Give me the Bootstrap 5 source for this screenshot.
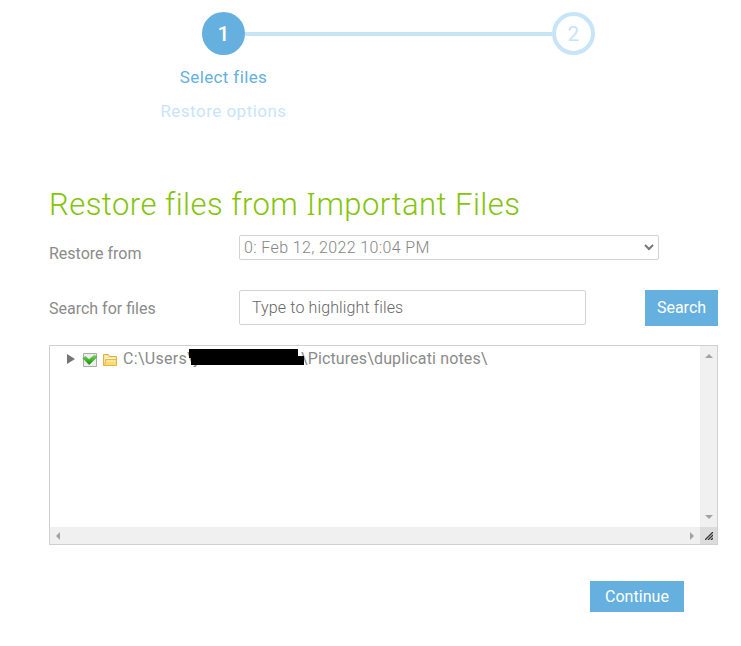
<!DOCTYPE html>
<html lang="en">
<head>
<meta charset="utf-8">
<title>Restore files</title>
<link href="https://cdn.jsdelivr.net/npm/bootstrap@5.3.0/dist/css/bootstrap.min.css" rel="stylesheet">
<style>
body{font-family:Roboto,"Noto Sans",sans-serif;font-size:16px;line-height:20px;color:#8b8b8b;background:#fff;width:741px;height:646px;overflow:hidden;letter-spacing:0}
.steps{margin-left:202px;width:393px;padding-top:12px}
.step-dot{width:43px;height:43px;border:4px solid #c7e5f6;color:#c7e5f6;font-size:21px;letter-spacing:0}
.step-dot.current{background:#65b0de;border-color:#65b0de;color:#fff;font-weight:500}
.step-line{height:4px;background:#c7e5f6}
.step-names{width:127px;margin-left:160px;font-size:17px;line-height:34px;padding-top:5px;color:#c7e5f6;letter-spacing:.48px}
.current-name{color:#65b0de;letter-spacing:.38px}
.restore{margin-left:49px;width:669px;padding-top:55px}
h1{font-size:31px;line-height:40px;font-weight:300;color:#84c40b;letter-spacing:.46px}
.cap-i{font-family:"Noto Sans",sans-serif;font-weight:300}
.version-row{margin-top:10px}
.query-row{margin-top:27px}
.field-name{width:190px;padding-top:9px;height:28px}
.version{width:420px;height:25px}
.version select{width:100%;height:25px;padding:0 4px;border:1px solid #d3d3d3;border-radius:2px;color:#858585;background:#fff;appearance:none;font-weight:300;letter-spacing:.38px;line-height:23px}
.version svg{right:4px;top:7px}
.query{width:347px;height:35px;padding:0 12px;border:1px solid #d3d3d3;border-radius:2px;font-weight:300;letter-spacing:.13px}
.query::placeholder{color:#666;opacity:1}
.action{background:#65b0de;color:#fff;border:0;border-radius:0;padding:0;letter-spacing:0;--bs-btn-line-height:20px}
.search{width:73px;height:36px}
.continue{width:94px;height:31px;letter-spacing:.05px}
.continue-row{margin-top:36px;padding-right:34px}
.tree{height:200px;margin-top:19px;border:1px solid #d0d0d0}
.vbar{width:17px;background:#f0f0f0}
.hbar{height:17px;background:#f0f0f0}
.grip{width:17px;height:17px;background:#dcdcdc}
.entry{height:26px;padding-left:16px}
.check{margin:2px 0 0 7px}
.folder{margin:2px 0 0 4px}
.path-start{margin-left:5px;letter-spacing:.3px}
.path-end{left:251px;top:3px;letter-spacing:.14px}
.mask{left:139px;top:3px}
.scroll-left{margin-left:6px}
.scroll-right{margin-right:6px}
svg{display:block}
</style>
<script src="https://cdn.jsdelivr.net/npm/bootstrap@5.3.0/dist/js/bootstrap.bundle.min.js"></script>
</head>
<body>
<div class="steps d-flex align-items-center">
  <div class="step-dot current rounded-circle d-flex align-items-center justify-content-center">1</div>
  <div class="step-line flex-grow-1"></div>
  <div class="step-dot rounded-circle d-flex align-items-center justify-content-center">2</div>
</div>
<div class="step-names text-center text-nowrap"><div class="current-name">Select files</div><div>Restore options</div></div>
<main class="restore">
  <h1 class="m-0 text-nowrap">Restore files from <span class="cap-i">I</span>mportant Files</h1>
  <div class="d-flex version-row">
    <label class="field-name" for="version">Restore from</label>
    <div class="version position-relative"><select id="version"><option>0: Feb 12, 2022 10:04 PM</option></select>
      <svg class="position-absolute pe-none" width="12" height="10"><path d="M2 3l4 4 4-4" fill="none" stroke="#777" stroke-width="2"/></svg></div>
  </div>
  <div class="d-flex query-row">
    <label class="field-name" for="query">Search for files</label>
    <input class="query" id="query" placeholder="Type to highlight files">
    <button class="btn action search ms-auto">Search</button>
  </div>
  <div class="tree d-flex flex-column">
    <div class="d-flex flex-grow-1">
      <div class="flex-grow-1 position-relative">
        <div class="entry d-flex align-items-center">
          <svg width="9" height="10"><path d="M1 0l8 5-8 5z" fill="#757575"/></svg>
          <svg class="check" width="16" height="16" viewBox="0 0 16 16"><defs><linearGradient id="g" x2="0" y2="1"><stop stop-color="#7bd95a"/><stop offset=".45" stop-color="#45bd2b"/><stop offset="1" stop-color="#168509"/></linearGradient></defs><path d="M1.5 1.5h13v13h-13z" fill="#eee" stroke="#aaa"/><path d="M.8 6.2L3.5 4.5 7 7.5l5.5-4.3L15 5 7.2 12.8z" fill="url(#g)" stroke="#3ba52a" stroke-width=".5"/></svg>
          <svg class="folder" width="16" height="16" viewBox="0 0 16 16"><path d="M1.5 13.5v-11h5l1 2h7v9z" fill="#fbe59b" stroke="#e2b04a"/><path d="M3 4.5h3M3 6.5h10" stroke="#fff6d5" fill="none"/><path d="M1.5 13.5l2-2.5V7.5h11v6z" fill="#fbdc72" stroke="#e5b03c" stroke-width=".8"/><path d="M4.5 9h9" stroke="#fff0b8"/></svg>
          <span class="path-start">C:\Users\j</span>
        </div>
        <span class="path-end position-absolute text-nowrap">\Pictures\duplicati notes\</span>
        <svg class="mask position-absolute" width="115" height="16"><path d="M0 0h109v7h6v9H2v-7H0z"/></svg>
      </div>
      <div class="vbar d-flex flex-column align-items-center justify-content-between pt-2 pb-2">
        <svg width="8" height="4"><path d="M0 4L4 0l4 4z" fill="#a3a3a3"/></svg>
        <svg width="8" height="4"><path d="M0 0l4 4 4-4z" fill="#a3a3a3"/></svg>
      </div>
    </div>
    <div class="d-flex">
      <div class="hbar flex-grow-1 d-flex align-items-center justify-content-between"><svg class="scroll-left" width="4" height="8"><path d="M4 0L0 4l4 4z" fill="#a3a3a3"/></svg><svg class="scroll-right" width="4" height="8"><path d="M0 0l4 4-4 4z" fill="#a3a3a3"/></svg></div>
      <div class="grip d-flex align-items-center justify-content-center"><svg width="8" height="8"><path d="M0 8l8-8M3 8l5-5M6 8l2-2" stroke="#333" stroke-width="1.3"/></svg></div>
    </div>
  </div>
  <div class="d-flex justify-content-end continue-row"><button class="btn action continue">Continue</button></div>
</main>
</body>
</html>
